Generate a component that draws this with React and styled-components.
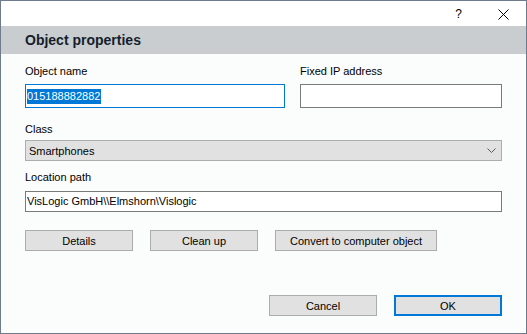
import React from "react";
import styled, { createGlobalStyle } from "styled-components";

const Global = createGlobalStyle`
  html, body { margin: 0; padding: 0; background: #ffffff; }
  * { box-sizing: border-box; }
`;

const Window = styled.div`
  width: 527px;
  height: 334px;
  border: 1px solid #6d7b8d;
  background: #fbfcfc;
  display: flex;
  flex-direction: column;
  font-family: "Liberation Sans", Arial, sans-serif;
  font-size: 11px;
  color: #000;
`;

const TitleBar = styled.div`
  height: 25px;
  background: #ffffff;
  display: flex;
  justify-content: flex-end;
  align-items: stretch;
`;

const CaptionButton = styled.div`
  width: 45px;
  display: flex;
  align-items: center;
  justify-content: center;
  font-size: 12px;
  color: #000;
  padding-top: 1px;
`;

const Header = styled.div`
  height: 28px;
  background: #c9cdd0;
  display: flex;
  align-items: center;
  padding-left: 24px;
  font-weight: bold;
  font-size: 14px;
  color: #161e2c;
`;

const Content = styled.div`
  flex: 1;
  display: flex;
  flex-direction: column;
  padding: 11px 24px 17px 24px;
`;

const TwoCols = styled.div`
  display: grid;
  grid-template-columns: 260px 1fr;
  column-gap: 15px;
`;

const Field = styled.div`
  display: flex;
  flex-direction: column;
  gap: ${(p) => p.$gap ?? 6}px;
  margin-top: ${(p) => p.$mt ?? 0}px;
`;

const Label = styled.div`
  line-height: 13px;
  height: 13px;
  white-space: nowrap;
`;

const TextBox = styled.div`
  height: ${(p) => p.$h ?? 21}px;
  border: 1px solid ${(p) => (p.$focused ? "#0078d7" : "#7a7a7a")};
  background: #ffffff;
  padding-left: 1px;
  display: flex;
  align-items: center;
  line-height: 15px;
  white-space: nowrap;
`;

const Selected = styled.span`
  background: #0078d7;
  color: #ffffff;
  line-height: 15px;
  padding-right: 1px;
`;

const Select = styled.div`
  height: 21px;
  border: 1px solid #adadad;
  background: #e1e1e1;
  display: flex;
  align-items: center;
  justify-content: space-between;
  padding: 0 5px 0 3px;
`;

const ButtonRow = styled.div`
  display: flex;
  gap: 17px;
  margin-top: ${(p) => p.$mt ?? 0}px;
  justify-content: ${(p) => (p.$end ? "flex-end" : "flex-start")};
`;

const Button = styled.div`
  width: ${(p) => p.$w ?? 108}px;
  height: 21px;
  border: ${(p) => (p.$default ? "2px solid #0078d7" : "1px solid #adadad")};
  background: #e1e1e1;
  display: flex;
  align-items: center;
  justify-content: center;
  font-size: 11px;
`;

const Spacer = styled.div`
  flex: 1;
`;

export default function App() {
  return (
    <>
      <Global />
      <Window>
        <TitleBar>
          <CaptionButton>?</CaptionButton>
          <CaptionButton>
            <svg width="11" height="11" viewBox="0 0 11 11">
              <path d="M0.5 0.5 L10.5 10.5 M10.5 0.5 L0.5 10.5" stroke="#000" strokeWidth="1" fill="none" />
            </svg>
          </CaptionButton>
        </TitleBar>
        <Header>Object properties</Header>
        <Content>
          <TwoCols>
            <Field>
              <Label>Object name</Label>
              <TextBox $h={24} $focused>
                <Selected>015188882882</Selected>
              </TextBox>
            </Field>
            <Field>
              <Label>Fixed IP address</Label>
              <TextBox $h={24} />
            </Field>
          </TwoCols>
          <Field $mt={15} $gap={4}>
            <Label>Class</Label>
            <Select>
              <span>Smartphones</span>
              <svg width="9" height="5" viewBox="0 0 9 5">
                <path d="M0.5 0.5 L4.5 4.5 L8.5 0.5" stroke="#5a5a5a" strokeWidth="1" fill="none" />
              </svg>
            </Select>
          </Field>
          <Field $mt={10} $gap={7}>
            <Label>Location path</Label>
            <TextBox>{"VisLogic GmbH\\\\Elmshorn\\Vislogic"}</TextBox>
          </Field>
          <ButtonRow $mt={18}>
            <Button>Details</Button>
            <Button>Clean up</Button>
            <Button $w={162}>Convert to computer object</Button>
          </ButtonRow>
          <Spacer />
          <ButtonRow $end>
            <Button>Cancel</Button>
            <Button $default>OK</Button>
          </ButtonRow>
        </Content>
      </Window>
    </>
  );
}
